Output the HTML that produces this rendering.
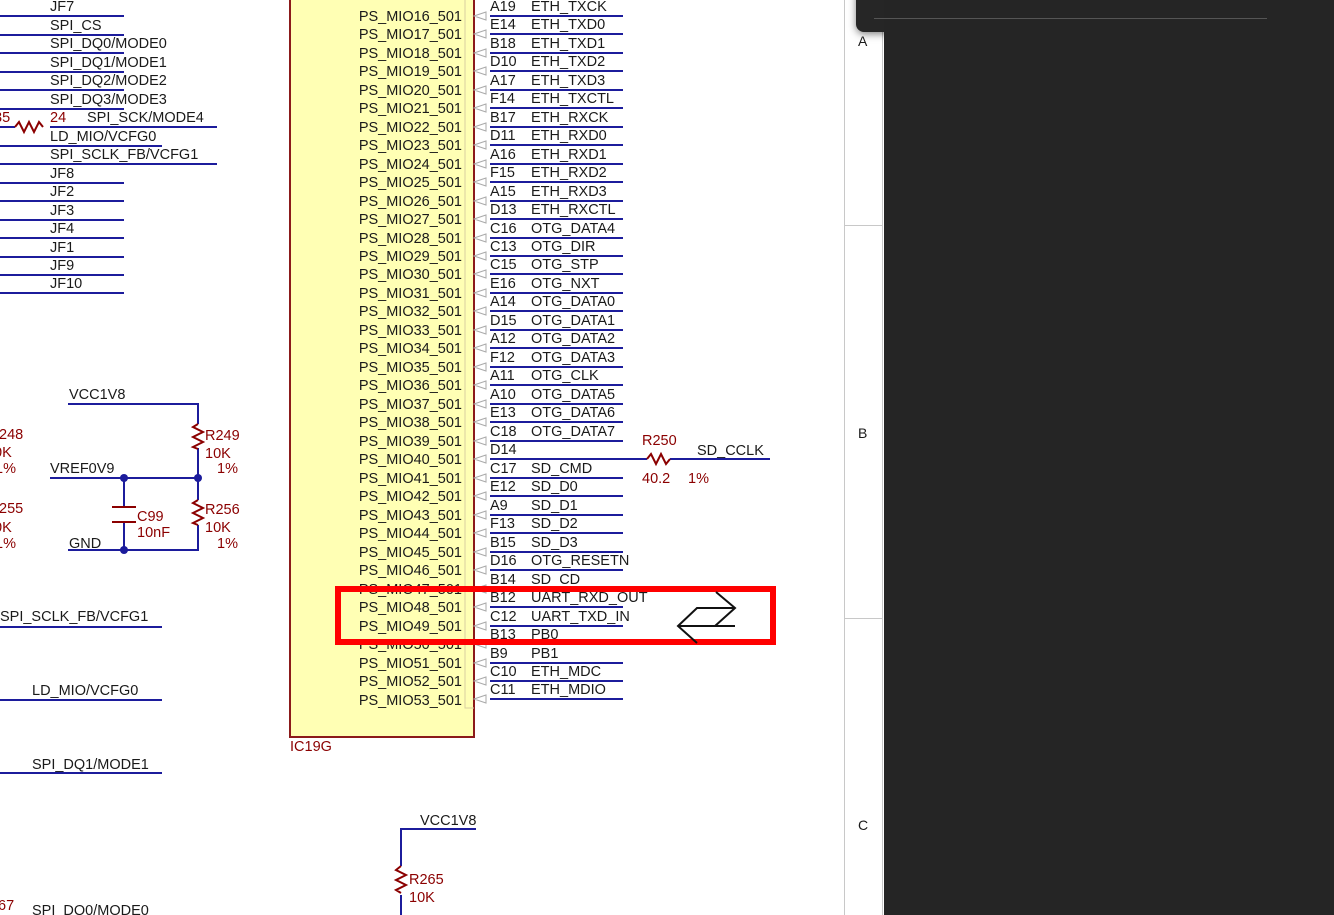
<!DOCTYPE html>
<html><head><meta charset="utf-8"><style>
html,body{margin:0;padding:0;width:1334px;height:915px;overflow:hidden;background:#fff}
svg{display:block}
text{font-family:"Liberation Sans",sans-serif;font-size:14.5px;fill:#1a1a1a}
.r{fill:#8b0000}
.n{stroke:#1c1c9c;stroke-width:2;fill:none}
.rs{stroke:#8b0000;stroke-width:2;fill:none}
</style></head><body>
<svg width="1334" height="915" xmlns="http://www.w3.org/2000/svg">
<g class="n">
<path d="M0 16H124M0 35H124M0 53H124M0 72H124M0 90H124M0 109H124M50 127H217M0 146H162M0 164H217M0 183H124M0 201H124M0 220H124M0 238H124M0 257H124M0 275H124M0 293H124"/>
<path d="M0 127H15"/>
</g>
<path class="rs" d="M15 127l4 -5 5 10 5 -10 5 10 5 -10 4 5"/>
<g>
<text x="50" y="11">JF7</text><text x="50" y="30">SPI_CS</text><text x="50" y="48">SPI_DQ0/MODE0</text><text x="50" y="67">SPI_DQ1/MODE1</text><text x="50" y="85">SPI_DQ2/MODE2</text><text x="50" y="104">SPI_DQ3/MODE3</text><text x="87" y="122">SPI_SCK/MODE4</text><text x="50" y="141">LD_MIO/VCFG0</text><text x="50" y="159">SPI_SCLK_FB/VCFG1</text><text x="50" y="178">JF8</text><text x="50" y="196">JF2</text><text x="50" y="215">JF3</text><text x="50" y="233">JF4</text><text x="50" y="252">JF1</text><text x="50" y="270">JF9</text><text x="50" y="288">JF10</text>
<text class="r" x="-6" y="122">35</text><text class="r" x="50" y="122">24</text>
</g>
<path class="n" d="M68 404H198V424M198 448V500M198 525V550H68M50 478H198M124 478V507M124 522V550"/>
<path class="rs" d="M198 424l-5 3 10 5 -10 5 10 5 -10 5 5 2M198 500l-5 3 10 5 -10 5 10 5 -10 5 5 2M112 507H136M112 522H136"/>
<circle cx="124" cy="478" r="4" fill="#1c1c9c"/><circle cx="198" cy="478" r="4" fill="#1c1c9c"/><circle cx="124" cy="550" r="4" fill="#1c1c9c"/>
<text x="69" y="399">VCC1V8</text><text x="50" y="473">VREF0V9</text><text x="69" y="548">GND</text>
<text class="r" x="205" y="440">R249</text><text class="r" x="205" y="458">10K</text><text class="r" x="217" y="473">1%</text>
<text class="r" x="205" y="514">R256</text><text class="r" x="205" y="532">10K</text><text class="r" x="217" y="548">1%</text>
<text class="r" x="137" y="521">C99</text><text class="r" x="137" y="537">10nF</text>
<text class="r" x="-1" y="439">248</text><text class="r" x="-6" y="457">0K</text><text class="r" x="-5" y="473">1%</text>
<text class="r" x="-1" y="513">255</text><text class="r" x="-6" y="532">0K</text><text class="r" x="-5" y="548">1%</text>
<path class="n" d="M0 627H162M0 700H162M0 773H162"/>
<text x="0" y="621">SPI_SCLK_FB/VCFG1</text><text x="32" y="695">LD_MIO/VCFG0</text><text x="32" y="769">SPI_DQ1/MODE1</text><text x="32" y="915">SPI_DQ0/MODE0</text><text class="r" x="-2" y="910">67</text>
<rect x="290" y="-5" width="184" height="742" fill="#ffffb4" stroke="#8b1a1a" stroke-width="2"/>
<path d="M465 0V708H474" stroke="#d8cfa0" fill="none"/>
<text class="r" x="290" y="751">IC19G</text>
<g text-anchor="end">
<text x="462" y="21">PS_MIO16_501</text><text x="462" y="39">PS_MIO17_501</text><text x="462" y="58">PS_MIO18_501</text><text x="462" y="76">PS_MIO19_501</text><text x="462" y="95">PS_MIO20_501</text><text x="462" y="113">PS_MIO21_501</text><text x="462" y="132">PS_MIO22_501</text><text x="462" y="150">PS_MIO23_501</text><text x="462" y="169">PS_MIO24_501</text><text x="462" y="187">PS_MIO25_501</text><text x="462" y="206">PS_MIO26_501</text><text x="462" y="224">PS_MIO27_501</text><text x="462" y="243">PS_MIO28_501</text><text x="462" y="261">PS_MIO29_501</text><text x="462" y="279">PS_MIO30_501</text><text x="462" y="298">PS_MIO31_501</text><text x="462" y="316">PS_MIO32_501</text><text x="462" y="335">PS_MIO33_501</text><text x="462" y="353">PS_MIO34_501</text><text x="462" y="372">PS_MIO35_501</text><text x="462" y="390">PS_MIO36_501</text><text x="462" y="409">PS_MIO37_501</text><text x="462" y="427">PS_MIO38_501</text><text x="462" y="446">PS_MIO39_501</text><text x="462" y="464">PS_MIO40_501</text><text x="462" y="483">PS_MIO41_501</text><text x="462" y="501">PS_MIO42_501</text><text x="462" y="520">PS_MIO43_501</text><text x="462" y="538">PS_MIO44_501</text><text x="462" y="557">PS_MIO45_501</text><text x="462" y="575">PS_MIO46_501</text><text x="462" y="594">PS_MIO47_501</text><text x="462" y="612">PS_MIO48_501</text><text x="462" y="631">PS_MIO49_501</text><text x="462" y="649">PS_MIO50_501</text><text x="462" y="668">PS_MIO51_501</text><text x="462" y="686">PS_MIO52_501</text><text x="462" y="705">PS_MIO53_501</text>
</g>
<g class="n">
<path d="M490 16H623M490 34H623M490 53H623M490 71H623M490 90H623M490 108H623M490 127H623M490 145H623M490 164H623M490 182H623M490 201H623M490 219H623M490 238H623M490 256H623M490 274H623M490 293H623M490 311H623M490 330H623M490 348H623M490 367H623M490 385H623M490 404H623M490 422H623M490 441H623M490 459H647M670 459H770M490 478H623M490 496H623M490 515H623M490 533H623M490 552H623M490 570H623M490 589H623M490 607H623M490 626H623M490 644H623M490 663H623M490 681H623M490 699H623"/>
</g>
<path class="rs" d="M647 459l4 -5 5 10 5 -10 5 10 4 -5"/>
<g stroke="#aaa" fill="none" stroke-width="1">
<path d="M474 16l12 -4v8zM474 34l12 -4v8zM474 53l12 -4v8zM474 71l12 -4v8zM474 90l12 -4v8zM474 108l12 -4v8zM474 127l12 -4v8zM474 145l12 -4v8zM474 164l12 -4v8zM474 182l12 -4v8zM474 201l12 -4v8zM474 219l12 -4v8zM474 238l12 -4v8zM474 256l12 -4v8zM474 274l12 -4v8zM474 293l12 -4v8zM474 311l12 -4v8zM474 330l12 -4v8zM474 348l12 -4v8zM474 367l12 -4v8zM474 385l12 -4v8zM474 404l12 -4v8zM474 422l12 -4v8zM474 441l12 -4v8zM474 459l12 -4v8zM474 478l12 -4v8zM474 496l12 -4v8zM474 515l12 -4v8zM474 533l12 -4v8zM474 552l12 -4v8zM474 570l12 -4v8zM474 589l12 -4v8zM474 607l12 -4v8zM474 626l12 -4v8zM474 644l12 -4v8zM474 663l12 -4v8zM474 681l12 -4v8zM474 699l12 -4v8z"/>
</g>
<g>
<text x="490" y="11">A19</text><text x="531" y="11">ETH_TXCK</text>
<text x="490" y="29">E14</text><text x="531" y="29">ETH_TXD0</text>
<text x="490" y="48">B18</text><text x="531" y="48">ETH_TXD1</text>
<text x="490" y="66">D10</text><text x="531" y="66">ETH_TXD2</text>
<text x="490" y="85">A17</text><text x="531" y="85">ETH_TXD3</text>
<text x="490" y="103">F14</text><text x="531" y="103">ETH_TXCTL</text>
<text x="490" y="122">B17</text><text x="531" y="122">ETH_RXCK</text>
<text x="490" y="140">D11</text><text x="531" y="140">ETH_RXD0</text>
<text x="490" y="159">A16</text><text x="531" y="159">ETH_RXD1</text>
<text x="490" y="177">F15</text><text x="531" y="177">ETH_RXD2</text>
<text x="490" y="196">A15</text><text x="531" y="196">ETH_RXD3</text>
<text x="490" y="214">D13</text><text x="531" y="214">ETH_RXCTL</text>
<text x="490" y="233">C16</text><text x="531" y="233">OTG_DATA4</text>
<text x="490" y="251">C13</text><text x="531" y="251">OTG_DIR</text>
<text x="490" y="269">C15</text><text x="531" y="269">OTG_STP</text>
<text x="490" y="288">E16</text><text x="531" y="288">OTG_NXT</text>
<text x="490" y="306">A14</text><text x="531" y="306">OTG_DATA0</text>
<text x="490" y="325">D15</text><text x="531" y="325">OTG_DATA1</text>
<text x="490" y="343">A12</text><text x="531" y="343">OTG_DATA2</text>
<text x="490" y="362">F12</text><text x="531" y="362">OTG_DATA3</text>
<text x="490" y="380">A11</text><text x="531" y="380">OTG_CLK</text>
<text x="490" y="399">A10</text><text x="531" y="399">OTG_DATA5</text>
<text x="490" y="417">E13</text><text x="531" y="417">OTG_DATA6</text>
<text x="490" y="436">C18</text><text x="531" y="436">OTG_DATA7</text>
<text x="490" y="454">D14</text>
<text x="490" y="473">C17</text><text x="531" y="473">SD_CMD</text>
<text x="490" y="491">E12</text><text x="531" y="491">SD_D0</text>
<text x="490" y="510">A9</text><text x="531" y="510">SD_D1</text>
<text x="490" y="528">F13</text><text x="531" y="528">SD_D2</text>
<text x="490" y="547">B15</text><text x="531" y="547">SD_D3</text>
<text x="490" y="565">D16</text><text x="531" y="565">OTG_RESETN</text>
<text x="490" y="584">B14</text><text x="531" y="584">SD_CD</text>
<text x="490" y="602">B12</text><text x="531" y="602">UART_RXD_OUT</text>
<text x="490" y="621">C12</text><text x="531" y="621">UART_TXD_IN</text>
<text x="490" y="639">B13</text><text x="531" y="639">PB0</text>
<text x="490" y="658">B9</text><text x="531" y="658">PB1</text>
<text x="490" y="676">C10</text><text x="531" y="676">ETH_MDC</text>
<text x="490" y="694">C11</text><text x="531" y="694">ETH_MDIO</text>
</g>
<text class="r" x="642" y="445">R250</text><text class="r" x="642" y="483">40.2</text><text class="r" x="688" y="483">1%</text>
<text x="697" y="455">SD_CCLK</text>
<path class="n" d="M476 829H401V866M401 895V915"/>
<path class="rs" d="M401 866l-5 4 10 5 -10 5 10 5 -10 5 5 3"/>
<text x="420" y="825">VCC1V8</text><text class="r" x="409" y="884">R265</text><text class="r" x="409" y="902">10K</text>
<rect x="338" y="589" width="435" height="53" fill="none" stroke="#ff0000" stroke-width="6"/>
<path d="M716 592L735 608L715 626M735 608H697L678 626L697 643M678 626H735" stroke="#111" stroke-width="2" fill="none"/>
<path d="M844.5 0V915M882.5 0V915M845 225.5H882M845 618.5H882" stroke="#c8c8c8" stroke-width="1"/>
<text x="858" y="46" style="font-size:14px">A</text><text x="858" y="438" style="font-size:14px">B</text><text x="858" y="830" style="font-size:14px">C</text>
<defs><filter id="sh" x="-20%" y="-50%" width="140%" height="200%"><feDropShadow dx="0" dy="2" stdDeviation="4" flood-color="#000" flood-opacity="0.5"/></filter></defs>
<rect x="856" y="-20" width="520" height="52" rx="8" fill="#252525" filter="url(#sh)"/>
<rect x="884" y="0" width="450" height="915" fill="#252525"/>
<path d="M874 18.5H1267" stroke="#555" stroke-width="1"/>
</svg>
</body></html>
